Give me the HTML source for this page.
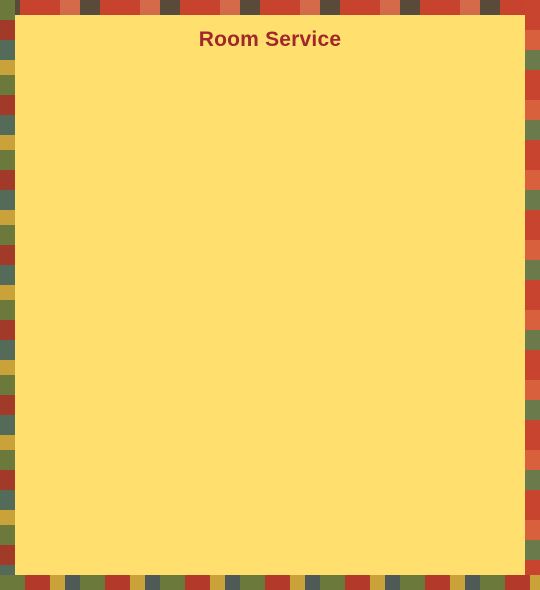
<!DOCTYPE html>
<html><head><meta charset="utf-8"><style>
html,body{margin:0;padding:0;width:540px;height:590px;overflow:hidden}
body{background:#8a3d2a;}
.l{position:absolute;left:0;top:0;width:15px;height:590px;background:repeating-linear-gradient(180deg,#6b7a3a 0 20px,#a23a2a 20px 40px,#556b5a 40px 60px,#c9a23a 60px 75px)}
.r{position:absolute;right:0;top:0;width:15px;height:590px;background:repeating-linear-gradient(180deg,#c9442f 0 30px,#d8603c 30px 50px,#6a7a4a 50px 70px)}
.b{position:absolute;left:0;bottom:0;width:540px;height:15px;background:repeating-linear-gradient(90deg,#6b7a3a 0 25px,#b33a2a 25px 50px,#c9a23a 50px 65px,#4d5a55 65px 80px)}
.t{position:absolute;left:0;top:0;width:540px;height:15px;background:repeating-linear-gradient(90deg,#5a4a3a 0 20px,#c8432e 20px 60px,#d36a4a 60px 80px)}
.panel{position:absolute;left:15px;top:15px;width:510px;height:560px;background:#ffe06e}
h1{margin:0;position:absolute;top:13px;left:0;width:510px;text-align:center;font:bold 21px "Liberation Sans",sans-serif;color:#a0282a;letter-spacing:0.2px}
</style></head><body>
<div class="t"></div><div class="l"></div><div class="r"></div><div class="b"></div>
<div class="panel"><h1>Room Service</h1></div>
</body></html>
